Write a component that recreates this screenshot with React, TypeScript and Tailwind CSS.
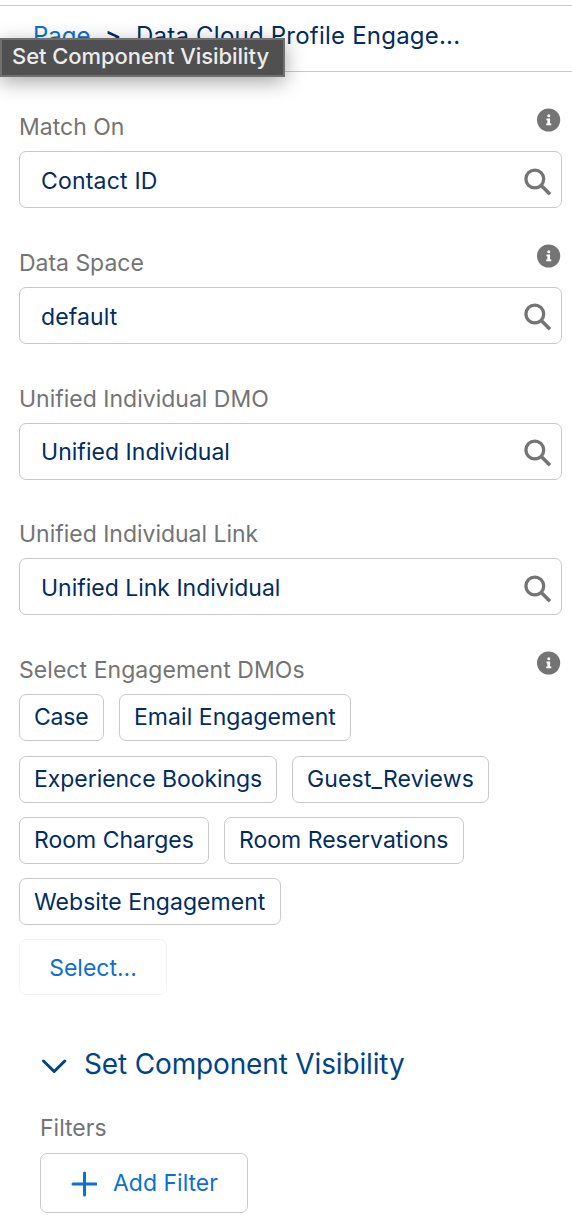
import type { ReactNode } from "react"

interface FieldProps {
  label: string
  labelClass: string
  value: string
  valueClass: string
  info?: boolean
}

const fields: FieldProps[] = [
  { label: "Match On", labelClass: "tracking-[0px]", value: "Contact ID", valueClass: "tracking-[0.2px]", info: true },
  { label: "Data Space", labelClass: "tracking-[-0.03px]", value: "default", valueClass: "tracking-[0.1px]", info: true },
  { label: "Unified Individual DMO", labelClass: "tracking-[0px]", value: "Unified Individual", valueClass: "tracking-[0.03px]" },
  { label: "Unified Individual Link", labelClass: "tracking-[-0.02px]", value: "Unified Link Individual", valueClass: "tracking-[-0.01px]" },
]

const tagRows = [
  [
    { name: "Case", className: "w-[85px] tracking-[-0.2px]" },
    { name: "Email Engagement", className: "w-[232px] tracking-[0.05px]" },
  ],
  [
    { name: "Experience Bookings", className: "w-[258px] tracking-[-0.05px]" },
    { name: "Guest_Reviews", className: "w-[197px] tracking-[0.15px]" },
  ],
  [
    { name: "Room Charges", className: "w-[190px]" },
    { name: "Room Reservations", className: "w-[240px]" },
  ],
  [{ name: "Website Engagement", className: "w-[262px] tracking-[0.05px]" }],
]

function InfoIcon() {
  return (
    <svg width="24" height="24" viewBox="0 0 24 24" className="shrink-0">
      <circle cx="11.6" cy="12" r="11.6" fill="#747474" />
      <circle cx="11.8" cy="7.8" r="1.5" fill="#fff" />
      <path d="M9.4 10.6h3.7v5h1.2v1.7H9.2v-1.7h1.2v-3.3h-1z" fill="#fff" />
    </svg>
  )
}

function SearchIcon() {
  return (
    <svg width="28" height="28" viewBox="0 0 28 28" fill="none" stroke="#747474" className="shrink-0">
      <circle cx="10.8" cy="11" r="8.9" strokeWidth="3.3" />
      <path d="M17 17.2L26 26.2" strokeWidth="3.5" />
    </svg>
  )
}

function Label({ children, className = "" }: { children: ReactNode; className?: string }) {
  return <span className={`whitespace-nowrap leading-7 text-[#747474] ${className}`}>{children}</span>
}

function Field({ label, labelClass, value, valueClass, info }: FieldProps) {
  return (
    <div className="h-[135.75px]">
      <div className="flex h-[43px] items-start justify-between pr-px">
        <Label className={`pt-[5px] ${labelClass}`}>{label}</Label>
        {info && <InfoIcon />}
      </div>
      <div className="flex h-[57px] items-center justify-between rounded-[7px] border border-[#c9c9c9] pr-[9px] pl-[21px]">
        <span className={`mt-[3px] whitespace-nowrap ${valueClass}`}>{value}</span>
        <div className="mt-1">
          <SearchIcon />
        </div>
      </div>
    </div>
  )
}

export default function App() {
  return (
    <div className="relative h-[1230px] w-[572px] overflow-hidden bg-white font-['Inter',sans-serif] text-[23px] text-[#032d60]">
      {/* Breadcrumb */}
      <header className="mt-[5px] flex h-[67px] items-center border-y border-[#c9c9c9] pb-[6px] pl-[33px] text-[24px] whitespace-nowrap">
        <span className="w-[72px] text-[#0b70d2]">Page</span>
        <span className="w-[31px] font-semibold">&gt;</span>
        <span className="tracking-[0.22px]">Data Cloud Profile Engage...</span>
      </header>

      <div className="absolute top-[38px] left-0 flex h-[39px] w-[285px] items-center border-2 border-[#707070] bg-[#505050] pb-[2px] pl-[10px] text-[22px] font-medium tracking-[-0.06px] whitespace-nowrap text-[#ececec] shadow-[0_5px_20px_rgba(0,0,0,0.35)]">
        Set Component Visibility
      </div>

      <main className="pt-[36px] pr-[10px] pl-[19px]">
        <div className="h-[543px]">
          {fields.map((field) => (
            <Field key={field.label} {...field} />
          ))}
        </div>

        <div className="flex h-[43.2px] items-start justify-between pr-px">
          <Label className="pt-[5px] tracking-[0.05px]">Select Engagement DMOs</Label>
          <InfoIcon />
        </div>

        <div className="flex flex-col gap-[14.4px]">
          {tagRows.map((row) => (
            <div key={row[0].name} className="flex gap-[15px]">
              {row.map((tag) => (
                <span
                  key={tag.name}
                  className={`flex h-[47px] items-center rounded-[7px] border border-[#c9c9c9] pl-[14px] whitespace-nowrap ${tag.className}`}
                >
                  {tag.name}
                </span>
              ))}
            </div>
          ))}
        </div>

        <button className="mt-[13.6px] flex h-[56px] w-[148px] items-center justify-center rounded-[7px] border border-[#f3f3f3] pt-[2px] text-[#0b70d2]">
          Select...
        </button>

        <section className="pl-[21px]">
          <h2 className="mt-[49px] flex h-[40px] items-center text-[28px] tracking-[-0.15px] whitespace-nowrap text-[#014486]">
            <svg width="28" height="20" viewBox="0 0 28 20" fill="none" className="mt-[5px] mr-[16px]">
              <path d="M3.5 5L14.2 15.5L24.8 5" stroke="#014486" strokeWidth="3" strokeLinecap="round" strokeLinejoin="round" />
            </svg>
            Set Component Visibility
          </h2>
          <div className="mt-[30px] flex h-[39px]">
            <Label>Filters</Label>
          </div>
          <button className="flex h-[60px] w-[208px] items-center rounded-[7px] border border-[#c9c9c9] pl-[30px] text-[#0b70d2]">
            <svg width="26" height="26" viewBox="0 0 26 26" className="mt-[3px] mr-[16px]" fill="none">
              <path d="M13.5 2v22M2 13h23" stroke="#0b70d2" strokeWidth="3" strokeLinecap="round" />
            </svg>
            <span className="mt-px whitespace-nowrap">Add Filter</span>
          </button>
        </section>
      </main>
    </div>
  )
}
